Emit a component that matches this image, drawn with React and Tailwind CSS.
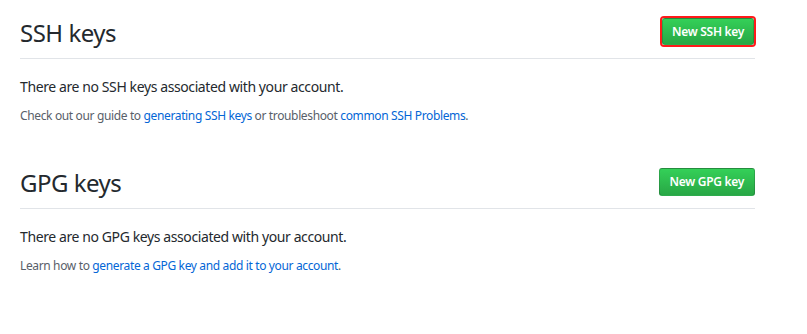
export default function App() {
  const font = { fontFamily: '"Segoe UI", "Noto Sans", sans-serif' };
  return (
    <div className="w-[807px] h-[334px] bg-white text-[#24292e]" style={font}>
      <div className="ml-[20px] w-[735px] pt-[15px]">
        <div className="flex justify-between border-b border-[#e1e4e8] pb-[7px]">
          <h2 className="text-[24px] leading-[36px] font-normal tracking-[-0.5px]">SSH keys</h2>
          <div className="self-start mt-[1px] mr-[-1px] rounded-[4px] border-2 border-[#ff1a1a]">
            <button className="block h-[27px] px-[9px] rounded-[3px] border border-[rgba(27,31,35,0.2)] bg-gradient-to-b from-[#34d058] to-[#28a745] text-white text-[12px] font-semibold tracking-[-0.3px]">
              New SSH key
            </button>
          </div>
        </div>
        <p className="mt-[18px] text-[14px] leading-[20px] tracking-[-0.4px]">There are no SSH keys associated with your account.</p>
        <p className="mt-[10px] text-[12px] leading-[18px] tracking-[-0.36px] text-[#586069]">
          Check out our guide to <a className="text-[#0366d6]" href="#">generating SSH keys</a> or troubleshoot{" "}
          <a className="text-[#0366d6]" href="#">common SSH Problems</a>.
        </p>

        <div className="mt-[40px] flex justify-between border-b border-[#e1e4e8] pb-[7px]">
          <h2 className="text-[24px] leading-[36px] font-normal tracking-[-0.5px]">GPG keys</h2>
          <button className="self-start mt-[3px] h-[28px] px-[10px] rounded-[3px] border border-[rgba(27,31,35,0.2)] bg-gradient-to-b from-[#34d058] to-[#28a745] text-white text-[12px] font-semibold tracking-[-0.3px]">
            New GPG key
          </button>
        </div>
        <p className="mt-[18px] text-[14px] leading-[20px] tracking-[-0.4px]">There are no GPG keys associated with your account.</p>
        <p className="mt-[10px] text-[12px] leading-[18px] tracking-[-0.36px] text-[#586069]">
          Learn how to <a className="text-[#0366d6]" href="#">generate a GPG key and add it to your account</a>.
        </p>
      </div>
    </div>
  );
}
